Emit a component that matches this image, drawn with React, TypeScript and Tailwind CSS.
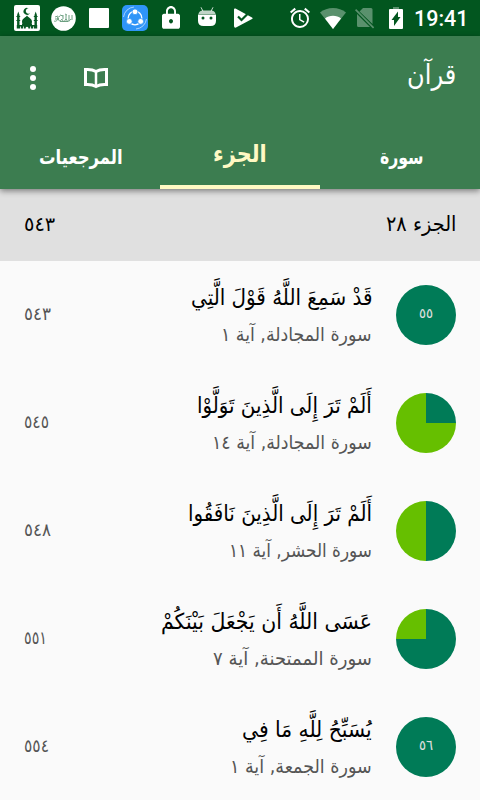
import { useLayoutEffect, useRef } from "react";
import type { ReactNode } from "react";

const ARABIC = "font-['DejaVu_Sans',sans-serif]";

const quarters = [
  { title: "قَدْ سَمِعَ اللَّهُ قَوْلَ الَّتِي", titleWidth: 181, detail: "سورة المجادلة, آية ١", detailWidth: 151, page: "٥٤٣", pageWidth: 27, filled: 4, label: "٥٥" },
  { title: "أَلَمْ تَرَ إِلَى الَّذِينَ تَوَلَّوْا", titleWidth: 175, detail: "سورة المجادلة, آية ١٤", detailWidth: 160, page: "٥٤٥", pageWidth: 25, filled: 1, label: "" },
  { title: "أَلَمْ تَرَ إِلَى الَّذِينَ نَافَقُوا", titleWidth: 184, detail: "سورة الحشر, آية ١١", detailWidth: 143, page: "٥٤٨", pageWidth: 27, filled: 2, label: "" },
  { title: "عَسَى اللَّهُ أَن يَجْعَلَ بَيْنَكُمْ", titleWidth: 211, detail: "سورة الممتحنة, آية ٧", detailWidth: 159, page: "٥٥١", pageWidth: 23, filled: 3, label: "" },
  { title: "يُسَبِّحُ لِلَّهِ مَا فِي", titleWidth: 130, detail: "سورة الجمعة, آية ١", detailWidth: 142, page: "٥٥٤", pageWidth: 25, filled: 4, label: "٥٦" },
];

// Squeezes a line of text horizontally so that it takes exactly `width` pixels.
function FitText({ width, className = "", children }: { width: number; className?: string; children: ReactNode }) {
  const ref = useRef<HTMLSpanElement>(null);

  useLayoutEffect(() => {
    const el = ref.current;
    if (el) el.style.transform = `scaleX(${width / el.offsetWidth})`;
  }, [width]);

  return (
    <span className="block" style={{ width }}>
      <span ref={ref} className={`block w-max origin-right whitespace-nowrap ${className}`}>
        {children}
      </span>
    </span>
  );
}

function StatusBar() {
  return (
    <div dir="ltr" className="flex h-9 items-center bg-[#02561f] pl-3.5 text-white">
      <svg className="size-[26px]" viewBox="0 0 26 26">
        <rect width="26" height="26" rx="2" fill="#fff" />
        <g fill="#075923">
          <path d="M13 10.500c.6 1.600 5 3 5 6.200 0 1.200-.5 1.800-1 2.300H9c-.5-.5-1-1.100-1-2.300 0-3.200 4.400-4.600 5-6.200z" />
          <path d="M14.800 3.300a3.500 3.500 0 1 0 1.200 4.900 2.700 2.700 0 1 1-1.200-4.900z" />
          <path d="M4.300 6.500L5.500 10v10H3.100V10zM21.700 6.500l1.200 3.500v10h-2.400V10z" />
          <path d="M2.400 11h3.800v1H2.400zM19.800 11h3.800v1h-3.800zM2.400 15h3.800v1H2.400zM19.800 15h3.800v1h-3.800z" />
          <path d="M2.800 20h20.400v3.500H2.800zM8 18.500h10V21H8z" />
        </g>
        <path stroke="#fff" strokeWidth=".8" d="M6.500 24v-2.500M9.500 24v-2.500M16.500 24v-2.500M19.500 24v-2.500" />
        <path fill="#fff" d="M11.700 24v-1.500q1.300-1.500 2.600 0V24z" />
      </svg>
      <svg className="ml-[11px] size-[25px]" viewBox="0 0 25 25">
        <circle cx="12.500" cy="12.500" r="12.300" fill="#fff" />
        <path fill="none" stroke="#5f9675" strokeWidth=".9" d="M3 15c2 1 4-1 4-3 0 4 3 3 4 1 0 3 3 3 4 0 1 3 3 3 5 0M4 11l3-1M9 9l3 1M14 8l2 1M18 9v6M21 9v5M15 9v5M12 9v4M4 13h4M9 15.500h8M6 12l3-2" />
      </svg>
      <div className="ml-[13px] size-5 rounded-[1px] bg-white" />
      <svg className="ml-[13px] size-[26px]" viewBox="0 0 26 26">
        <rect width="26" height="26" rx="5" fill="#2f95f8" />
        <circle cx="13" cy="13" r="6.800" fill="none" stroke="#fff" strokeWidth="1.300" />
        <path fill="none" stroke="#b5daff" strokeWidth=".9" d="M1.500 12A11.500 11.500 0 0 1 12 2M24.500 14A11.500 11.500 0 0 1 14 24" />
        <g fill="#fff" stroke="#2f95f8" strokeWidth=".8">
          <circle cx="13" cy="6.800" r="2.900" />
          <circle cx="7.300" cy="16.400" r="2.900" />
          <circle cx="18.700" cy="16.400" r="2.900" />
        </g>
      </svg>
      <svg className="ml-[11px] h-[26px] w-6" viewBox="0 0 24 24" preserveAspectRatio="none" fill="currentColor">
        <path d="M19 8h-2V6c0-2.760-2.240-5-5-5S7 3.240 7 6v2H5c-1.100 0-2 .9-2 2v10c0 1.100.9 2 2 2h14c1.100 0 2-.9 2-2V10c0-1.100-.9-2-2-2zm-7 9c-1.100 0-2-.9-2-2s.9-2 2-2 2 .9 2 2-.9 2-2 2zm3.100-9H8.900V6c0-1.710 1.390-3.100 3.100-3.100s3.100 1.390 3.100 3.100v2z" />
      </svg>
      <svg className="ml-[15px] h-[22px] w-[18px]" viewBox="0 0 18 22" fill="currentColor">
        <path d="M0 7.500h18V14Q18 19 12.500 19h-7Q0 19 0 14z" />
        <path opacity=".75" d="M.5 7Q1 3.500 5 3.500h8q4 0 4.500 3.500z" />
        <path stroke="currentColor" strokeWidth=".8" d="M3 .3l2 4M15 .3l-2 4" />
        <circle cx="5" cy="11" r="1.500" fill="#02561f" />
        <circle cx="13" cy="11" r="1.500" fill="#02561f" />
      </svg>
      <svg className="ml-[18px] h-5 w-[19px]" viewBox="0 0 19 20">
        <path fill="#fff" d="M0 1.500Q0 0 1.500.5L18 9.500q1.500.8 0 1.500L2 19.600Q0 20 0 18z" />
        <path fill="none" stroke="#02561f" strokeWidth="2.200" d="M4 8.500l3.500 3.500L13.500 6" />
      </svg>
      <svg className="ml-[35px] size-6" viewBox="0 0 24 24" fill="currentColor">
        <path d="M22 5.720l-4.600-3.860-1.290 1.530 4.600 3.860L22 5.720zM7.880 3.390L6.600 1.860 2 5.710l1.290 1.530 4.590-3.850zM12.500 8H11v6l4.750 2.850.75-1.230-4-2.370V8zM12 4c-4.970 0-9 4.030-9 9s4.020 9 9 9a9 9 0 0 0 0-18zm0 16c-3.870 0-7-3.130-7-7s3.130-7 7-7 7 3.130 7 7-3.130 7-7 7z" />
      </svg>
      <svg className="ml-[8px] h-[21px] w-[26px]" viewBox="0 0 26 21" fill="currentColor">
        <path opacity=".35" d="M13 21L0 4.500C7-1.500 19-1.500 26 4.500z" />
        <path d="M13 21L5 10.500c4-3.700 12-3.700 16 0z" />
      </svg>
      <svg className="ml-[9px] h-[21px] w-5" viewBox="0 0 20 21" fill="currentColor" opacity=".35">
        <path d="M8 0h8q1.500 0 1.500 1.500V16L4.500 3.500zM2 6l13 13H3.500Q2 19 2 17.500z" />
        <path d="M1.200 1L0 2.200 18 20.500l1.200-1.200z" />
      </svg>
      <svg className="ml-[14px] h-[22px] w-[14px]" viewBox="0 0 14 22">
        <path fill="#fff" opacity=".35" d="M4 0h6v2H4z" />
        <path fill="#fff" d="M1 2h12q1 0 1 1v18q0 1-1 1H1q-1 0-1-1V3q0-1 1-1z" />
        <path fill="#02561f" d="M9 4.500v5.500h2.500L5 19v-6H2.500z" />
      </svg>
      <span className="ml-[11px] pt-0.5 font-[Roboto] text-[21.500px] leading-none font-medium">19:41</span>
    </div>
  );
}

function AppBar() {
  return (
    <header className="relative z-10 flex h-[153px] flex-col bg-[#3c7d50] text-white shadow-[0_2px_6px_rgba(0,0,0,0.45)]">
      <div className="flex h-[84px] items-center justify-between pr-6 pl-[30px]">
        <FitText width={49} className="pb-1.5 text-[28px]">قرآن</FitText>
        <div className="flex items-center gap-[48px]">
          <svg className="h-6 w-6" viewBox="0 0 24 24" fill="none" stroke="#fff">
            <path strokeWidth="3" d="M1.500 3.500Q8 3 12 5.500 16 3 22.500 3.500V18.500Q16 18 12 20.500 8 18 1.500 18.500z" />
            <path strokeWidth="2.500" d="M12 5v15" />
          </svg>
          <svg className="h-6 w-1.5" viewBox="0 0 6 24" fill="currentColor">
            <circle cx="3" cy="3" r="3" />
            <circle cx="3" cy="12" r="3" />
            <circle cx="3" cy="21" r="3" />
          </svg>
        </div>
      </div>
      <nav className="grid flex-1 grid-cols-3 font-bold">
        <div className="flex items-center justify-center pt-1 pl-1">
          <FitText width={44} className="text-[20px]">سورة</FitText>
        </div>
        <div className="flex items-center justify-center border-b-4 border-[#fff9c4] pt-0.5 text-[#fff9c4]">
          <FitText width={54} className="text-[24px]">الجزء</FitText>
        </div>
        <div className="flex items-center justify-center pt-1 pl-0.5">
          <FitText width={84} className="text-[20px]">المرجعيات</FitText>
        </div>
      </nav>
    </header>
  );
}

function QuarterPie({ filled, label }: { filled: number; label: string }) {
  return (
    <div
      className="flex size-[60px] items-center justify-center rounded-full text-[#e0e0e0]"
      style={{ background: `conic-gradient(#007b57 ${filled * 25}%, #66bf00 0)` }}
    >
      {label && <FitText width={14} className="pb-1 text-[14px]">{label}</FitText>}
    </div>
  );
}

export default function App() {
  return (
    <div dir="rtl" className={`h-[800px] w-[480px] overflow-hidden bg-[#fafafa] ${ARABIC}`}>
      <StatusBar />
      <AppBar />
      <section>
        <div className="flex h-[72px] items-center justify-between bg-[#e0e0e0] px-6 text-black">
          <FitText width={71} className="text-[21px]">الجزء ٢٨</FitText>
          <FitText width={31} className="pb-[3px] text-[20px]">٥٤٣</FitText>
        </div>
        {quarters.map((quarter) => (
          <div key={quarter.page} className="flex h-[108px] items-center px-6">
            <QuarterPie filled={quarter.filled} label={quarter.label} />
            <div className="mr-6 flex flex-1 flex-col">
              <FitText width={quarter.titleWidth} className="pt-0.5 text-[22px] leading-9 text-black">{quarter.title}</FitText>
              <FitText width={quarter.detailWidth} className="text-[19px] leading-9 text-[#555]">{quarter.detail}</FitText>
            </div>
            <FitText width={quarter.pageWidth} className="pb-[3px] text-[18px] text-[#555]">{quarter.page}</FitText>
          </div>
        ))}
      </section>
    </div>
  );
}
